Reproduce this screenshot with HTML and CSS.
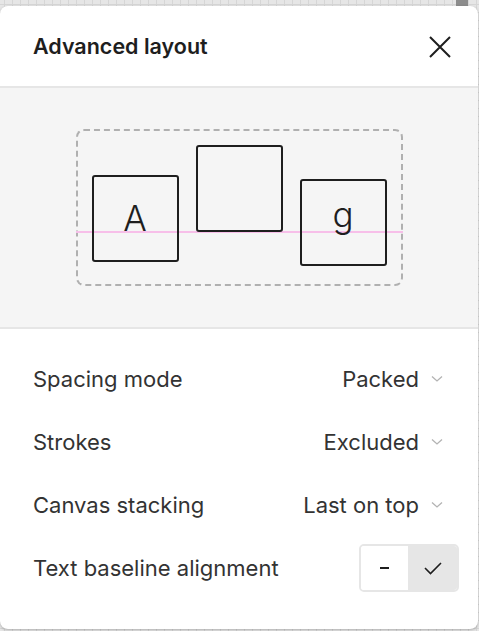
FILE: index.html
```html
<!DOCTYPE html>
<html>
<head>
<meta charset="utf-8">
<link rel="stylesheet" href="styles.css">
</head>
<body>
<div class="scroll-thumb"></div>
<div class="panel">
  <div class="header">
    <div class="title">Advanced layout</div>
    <svg class="close" width="24" height="24" viewBox="0 0 24 24"><path d="M2 2 L22 22 M22 2 L2 22" stroke="#1e1e1e" stroke-width="2" fill="none"/></svg>
  </div>
  <div class="preview">
    <div class="frame">
      <div class="baseline"></div>
      <div class="box box-a"><span>A</span></div>
      <div class="box box-mid"></div>
      <div class="box box-g"><span>g</span></div>
    </div>
  </div>
  <div class="rows">
    <div class="row">
      <div class="label">Spacing mode</div>
      <div class="value">Packed <svg class="chev" width="12" height="8" viewBox="0 0 12 8"><path d="M1 1.5 L6 6 L11 1.5" stroke="#b3b3b3" stroke-width="1.3" fill="none"/></svg></div>
    </div>
    <div class="row">
      <div class="label">Strokes</div>
      <div class="value">Excluded <svg class="chev" width="12" height="8" viewBox="0 0 12 8"><path d="M1 1.5 L6 6 L11 1.5" stroke="#b3b3b3" stroke-width="1.3" fill="none"/></svg></div>
    </div>
    <div class="row">
      <div class="label">Canvas stacking</div>
      <div class="value">Last on top <svg class="chev" width="12" height="8" viewBox="0 0 12 8"><path d="M1 1.5 L6 6 L11 1.5" stroke="#b3b3b3" stroke-width="1.3" fill="none"/></svg></div>
    </div>
    <div class="row">
      <div class="label">Text baseline alignment</div>
      <div class="toggle">
        <div class="opt opt-off"><span class="dash"></span></div>
        <div class="opt opt-on"><svg width="20" height="16" viewBox="0 0 20 16"><path d="M2 8 L7.5 13.5 L18 3" stroke="#1e1e1e" stroke-width="1.6" fill="none"/></svg></div>
      </div>
    </div>
  </div>
</div>
</body>
</html>
```
FILE: styles.css
```css
html, body {
  margin: 0;
  padding: 0;
}
body {
  width: 479px;
  height: 631px;
  overflow: hidden;
  position: relative;
  font-family: Inter, "Noto Sans", sans-serif;
  color: #1e1e1e;
  background-color: #e6e6e6;
  background-image:
    linear-gradient(to right, #d6d6d6 1px, transparent 1px),
    linear-gradient(to bottom, #d6d6d6 1px, transparent 1px);
  background-size: 8px 8px;
  background-position: 4px 4px;
}
.scroll-thumb {
  position: absolute;
  left: 456px;
  top: 0;
  width: 12px;
  height: 10px;
  background: #8c8c8c;
}
.panel {
  position: relative;
  margin-top: 6px;
  width: 478px;
  height: 623px;
  background: #fff;
  border-radius: 8px;
  box-shadow: 0 1px 3px rgba(0,0,0,0.25);
  overflow: hidden;
  display: flex;
  flex-direction: column;
}
.header {
  height: 80px;
  flex: none;
  border-bottom: 2px solid #e6e6e6;
  display: flex;
  align-items: center;
  justify-content: space-between;
  padding: 0 26px 0 33px;
  box-sizing: content-box;
}
.title {
  font-size: 21.5px;
  font-weight: 600;
}
.close {
  display: block;
  margin-top: 2px;
}
.preview {
  height: 239px;
  flex: none;
  background: #f5f5f5;
  border-bottom: 2px solid #e6e6e6;
  display: flex;
  justify-content: center;
  align-items: center;
}
.frame {
  position: relative;
  width: 323px;
  height: 153px;
  border: 2px dashed #b0b0b0;
  border-radius: 8px;
}
.baseline {
  position: absolute;
  left: -2px;
  right: -2px;
  top: 100px;
  height: 2px;
  background: #f7bfe9;
}
.box {
  position: absolute;
  width: 83px;
  height: 83px;
  border: 2px solid #1e1e1e;
  border-radius: 3px;
  display: flex;
  justify-content: center;
}
.box span {
  font-size: 35px;
  font-weight: 300;
  line-height: 1;
}
.box-a { left: 14px; top: 44px; }
.box-a span { margin-top: 24px; }
.box-mid { left: 118px; top: 14px; }
.box-g { left: 222px; top: 48px; }
.box-g span { margin-top: 16px; }
.rows {
  display: flex;
  flex-direction: column;
  padding-top: 18px;
}
.row {
  height: 63px;
  display: flex;
  align-items: center;
  justify-content: space-between;
  padding: 0 19px 0 33px;
}
.label {
  font-size: 22px;
  color: #333;
}
.value {
  font-size: 22px;
  color: #333;
  display: flex;
  align-items: center;
  gap: 12px;
  padding-right: 16px;
}
.chev {
  display: block;
}
.toggle {
  display: flex;
  border: 2px solid #e6e6e6;
  border-radius: 5px;
  overflow: hidden;
}
.opt {
  width: 47px;
  height: 44px;
  display: flex;
  align-items: center;
  justify-content: center;
}
.opt-off { background: #fff; }
.opt-on { background: #e6e6e6; width: 49px; }
.dash {
  width: 9px;
  height: 2px;
  background: #1e1e1e;
}
```
